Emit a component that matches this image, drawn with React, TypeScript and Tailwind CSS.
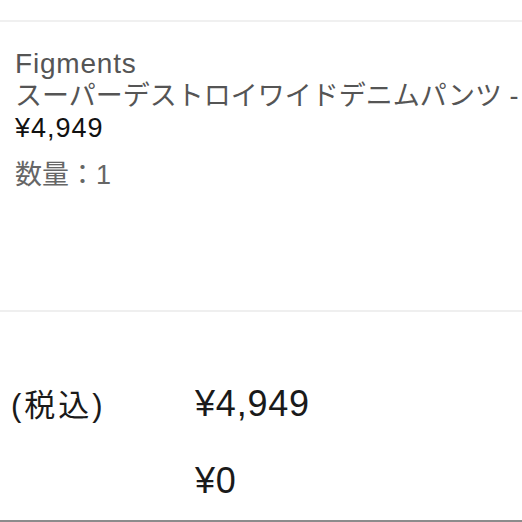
import React from "react";

const font = { fontFamily: '"Liberation Sans", "Noto Sans CJK JP", sans-serif' };

export default function App() {
  return (
    <div className="w-[522px] h-[522px] bg-white overflow-hidden flex flex-col" style={font}>
      <div className="h-[20px] shrink-0" />
      <div className="border-t-2 border-[#f0f0f0] h-[290px] shrink-0 pl-[15px] pt-[26px]">
        <p className="text-[28px] leading-[32px] text-[#555555] tracking-[0.8px]">Figments</p>
        <p className="text-[27px] leading-[32px] text-[#555555] whitespace-nowrap overflow-hidden">
          スーパーデストロイワイドデニムパンツ - ブルー
        </p>
        <p className="text-[27px] leading-[33px] text-[#111111] tracking-[1px]">¥4,949</p>
        <p className="text-[27px] leading-[32px] text-[#666666] mt-[14px]">数量：1</p>
      </div>
      <div className="border-t-2 border-[#efefef] flex-1 pt-[72px]">
        <div className="grid grid-cols-[195px_1fr] gap-y-[35px] items-baseline">
          <p className="pl-[11px] text-[31px] leading-[40px] text-[#1a1a1a] tracking-[3px]">(税込)</p>
          <p className="text-[36px] leading-[40px] text-[#1a1a1a] tracking-[0.8px]">¥4,949</p>
          <div />
          <p className="text-[36px] leading-[40px] text-[#1a1a1a] tracking-[0.8px]">¥0</p>
        </div>
      </div>
      <div className="h-[2px] bg-[#8c8c8c] shrink-0" />
    </div>
  );
}
